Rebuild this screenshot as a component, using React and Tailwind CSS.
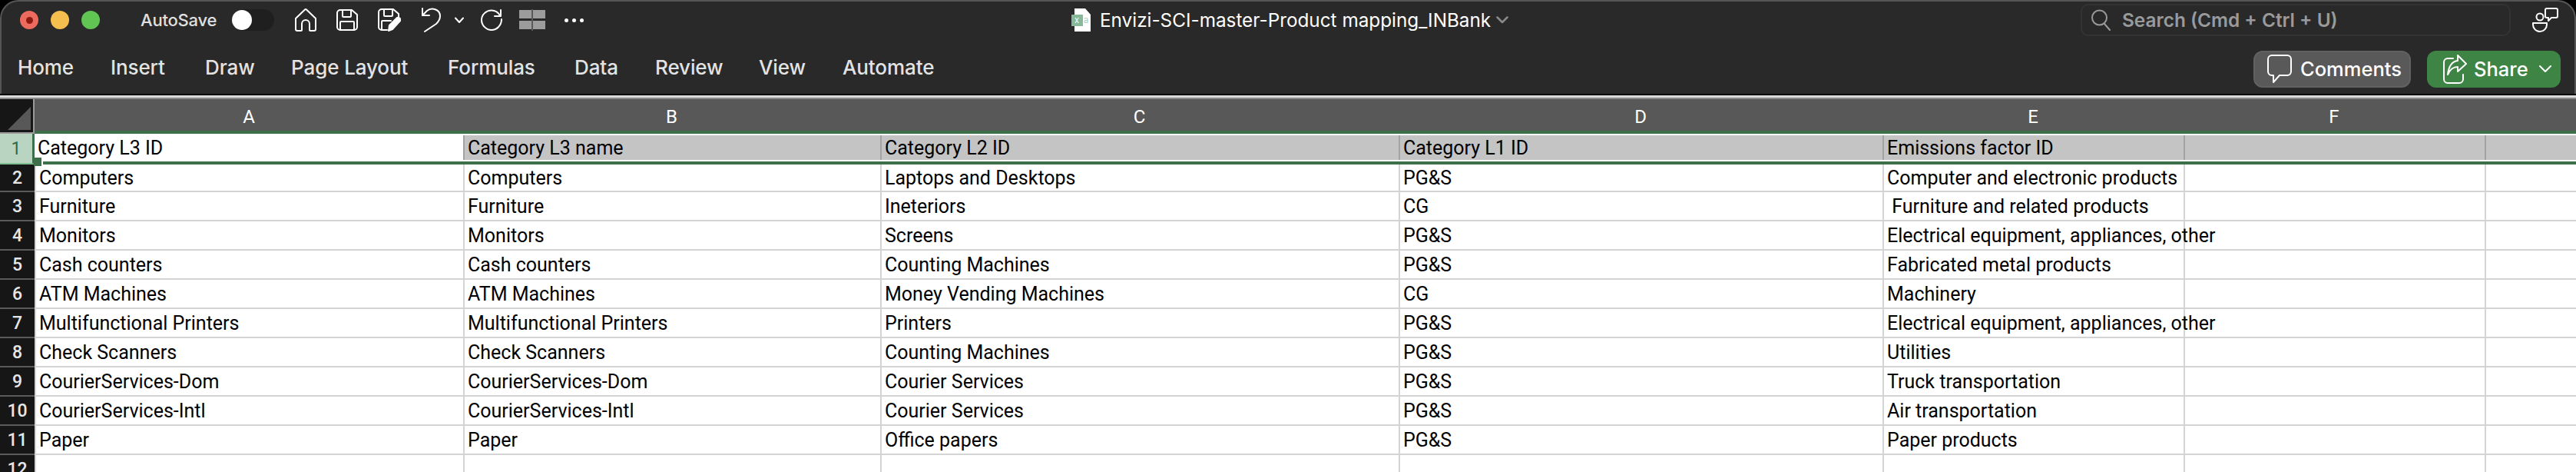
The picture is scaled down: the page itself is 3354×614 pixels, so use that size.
import React from "react";

const rows = [
  ["Computers", "Computers", "Laptops and Desktops", "PG&S", "Computer and electronic products"],
  ["Furniture", "Furniture", "Ineteriors", "CG", " Furniture and related products"],
  ["Monitors", "Monitors", "Screens", "PG&S", "Electrical equipment, appliances, other"],
  ["Cash counters", "Cash counters", "Counting Machines", "PG&S", "Fabricated metal products"],
  ["ATM Machines", "ATM Machines", "Money Vending Machines", "CG", "Machinery"],
  ["Multifunctional Printers", "Multifunctional Printers", "Printers", "PG&S", "Electrical equipment, appliances, other"],
  ["Check Scanners", "Check Scanners", "Counting Machines", "PG&S", "Utilities"],
  ["CourierServices-Dom", "CourierServices-Dom", "Courier Services", "PG&S", "Truck transportation"],
  ["CourierServices-Intl", "CourierServices-Intl", "Courier Services", "PG&S", "Air transportation"],
  ["Paper", "Paper", "Office papers", "PG&S", "Paper products"],
  ["", "", "", "", ""],
];

const headers = ["Category L3 ID", "Category L3 name", "Category L2 ID", "Category L1 ID", "Emissions factor ID", "", ""];
const letters = ["A", "B", "C", "D", "E", "F", ""];
const menu = [
  ["Home", "w-[121px]"],
  ["Insert", "w-[123px]"],
  ["Draw", "w-[112px]"],
  ["Page Layout", "w-[204px]"],
  ["Formulas", "w-[165px]"],
  ["Data", "w-[105px]"],
  ["Review", "w-[135px]"],
  ["View", "w-[109px]"],
  ["Automate", "w-[130px]"],
];

const gridCols = "grid grid-cols-[45px_558px_543px_675px_630px_392px_392px_119px]";
const cellFont = "font-['Roboto',sans-serif]";

const Icon = ({ w, h, children, className = "" }) => (
  <svg width={w} height={h} viewBox={`0 0 ${w} ${h}`} fill="none" stroke="#fff" strokeWidth="2" strokeLinecap="round" strokeLinejoin="round" className={`shrink-0 ${className}`}>
    {children}
  </svg>
);

const TitleBar = () => (
  <div className="flex h-[48px] items-center">
    <div className="ml-[24px] flex w-[116px] gap-[16px]">
      <div className="flex h-[24px] w-[24px] items-center justify-center rounded-full bg-[#ec6a5e]">
        <div className="h-[9px] w-[9px] rounded-full bg-[#8c1a10]" />
      </div>
      <div className="h-[24px] w-[24px] rounded-full bg-[#f5bf4f]" />
      <div className="h-[24px] w-[24px] rounded-full bg-[#61c554]" />
    </div>
    <span className="ml-[41px] w-[119px] text-[22px] font-medium tracking-[-0.2px] text-[#e0e0e0]">AutoSave</span>
    <div className="flex h-[28px] w-[55px] items-center rounded-full bg-[#1f1f1f]">
      <div className="h-[26px] w-[26px] rounded-full bg-white" />
    </div>
    {/* quick access */}
    <Icon w={28} h={30} className="ml-[27px]">
      <path d="M1 13 L13 1.5 a1.5 1.5 0 0 1 2 0 L27 13 V27 a2 2 0 0 1 -2 2 H20 a1 1 0 0 1 -1 -1 V20 a5 5 0 0 0 -10 0 V28 a1 1 0 0 1 -1 1 H3 a2 2 0 0 1 -2 -2 Z" />
    </Icon>
    <Icon w={28} h={28} className="ml-[26px]">
      <path d="M5 1 H20 L27 7 V23 a4 4 0 0 1 -4 4 H5 a4 4 0 0 1 -4 -4 V5 a4 4 0 0 1 4 -4 Z" />
      <path d="M8 1 V9 a1 1 0 0 0 1 1 H18 a1 1 0 0 0 1 -1 V1" />
      <path d="M5 27 V17 a1 1 0 0 1 1 -1 H22 a1 1 0 0 1 1 1 V27" />
    </Icon>
    <Icon w={30} h={30} className="ml-[26px]">
      <path d="M12 28 H5 a4 4 0 0 1 -4 -4 V5 a4 4 0 0 1 4 -4 H20 L27 7 V11" />
      <path d="M8 1 V9 a1 1 0 0 0 1 1 H18 a1 1 0 0 0 1 -1 V1" />
      <path d="M5 27 V17 a1 1 0 0 1 1 -1 H17" />
      <path d="M14 29 L15 22 L25 12 a3 3 0 0 1 4 4 L19 27 Z" fill="#fff" />
    </Icon>
    <Icon w={28} h={32} className="ml-[26px]">
      <path d="M2 1 V10 H11" />
      <path d="M2 10 L8 4 C14 -1 25 2 25 11 C25 15 23 18 20 21 L5 31" />
    </Icon>
    <Icon w={12} h={9} className="ml-[16px]">
      <path d="M1 1.5 L6 7 L11 1.5" />
    </Icon>
    <Icon w={28} h={28} className="ml-[22px]">
      <path d="M26 1 V9 H18" />
      <path d="M25 8 C22 3 18 1.5 14 1.5 C7 1.5 1 7 1 14 C1 21 7 27 14 27 C21 27 27 21 27 13" />
    </Icon>
    <svg width="34" height="28" viewBox="0 0 34 28" className="ml-[22px] shrink-0">
      <rect x="0" y="1" width="16" height="11" fill="#9c9c9c" />
      <rect x="18" y="1" width="16" height="11" fill="#9c9c9c" />
      <rect x="0" y="15" width="16" height="11" fill="#9c9c9c" />
      <rect x="18" y="15" width="16" height="11" fill="#9c9c9c" />
      <path d="M17 0 V28" stroke="#8a8a8a" />
    </svg>
    <div className="ml-[25px] flex gap-[5px]">
      <div className="h-[5px] w-[5px] rounded-full bg-white" />
      <div className="h-[5px] w-[5px] rounded-full bg-white" />
      <div className="h-[5px] w-[5px] rounded-full bg-white" />
    </div>
    {/* file name */}
    <svg width="26" height="30" viewBox="0 0 26 30" className="ml-[635px] shrink-0">
      <path d="M4 0 H18 L25 8 V30 H4 Z" fill="#fff" />
      <rect x="0" y="8" width="15" height="15" fill="#86b89a" />
      <text x="4" y="19" fontSize="11" fill="#fff" fontFamily="Inter">x</text>
      <text x="16" y="19" fontSize="11" fill="#a6cdb4" fontFamily="Inter">a</text>
    </svg>
    <span className="ml-[11px] whitespace-nowrap text-[24.3px] text-white">Envizi-SCI-master-Product mapping_INBank</span>
    <Icon w={16} h={10} className="ml-[7px]">
      <path d="M1.5 1.5 L8 8 L14.5 1.5" stroke="#8a8a8a" strokeWidth="2.5" />
    </Icon>
    {/* search */}
    <div className="ml-auto flex h-[42px] w-[560px] items-center rounded-[10px] border-2 border-[#333333] pl-[12px]">
      <svg width="26" height="28" viewBox="0 0 26 28" fill="none" stroke="#9a9a9a" strokeWidth="2" strokeLinecap="round" className="shrink-0">
        <circle cx="10.5" cy="11" r="9.5" />
        <path d="M17 19 L24 27" />
      </svg>
      <span className="ml-[14px] whitespace-nowrap text-[24.4px] font-semibold text-[#9a9a9a]">Search (Cmd + Ctrl + U)</span>
    </div>
    <svg width="34" height="32" viewBox="0 0 34 32" fill="none" stroke="#fff" strokeWidth="2" strokeLinejoin="round" className="ml-[28px] mr-[21px] shrink-0">
      <circle cx="10" cy="12" r="4.5" />
      <path d="M1 20 H19 V22 a9 9 0 0 1 -9 9 a9 9 0 0 1 -9 -9 Z" />
      <path d="M19 1 H31 a2 2 0 0 1 2 2 V11 a2 2 0 0 1 -2 2 H25 L21 17 V13 H19 a2 2 0 0 1 -2 -2 V3 a2 2 0 0 1 2 -2 Z" />
    </svg>
  </div>
);

const Ribbon = () => (
  <div className="flex h-[72px] items-center">
    <div className="ml-[21px] flex pt-[2px]">
      {menu.map(([label, width]) => (
        <span key={label} className={`${width} whitespace-nowrap text-[26px] font-medium tracking-[-0.1px] text-[#e3e3e3]`}>
          {label}
        </span>
      ))}
    </div>
    <div className="ml-auto mr-[18px] flex items-center gap-[21px] pt-[8px]">
      <div className="flex h-[48px] w-[205px] items-center rounded-[12px] border-2 border-[#616161] bg-[#595959] pl-[16px]">
        <Icon w={32} h={38}>
          <path d="M6 1 H26 a5 5 0 0 1 5 5 V22 a5 5 0 0 1 -5 5 H16 L8 36 V27 H6 a5 5 0 0 1 -5 -5 V6 a5 5 0 0 1 5 -5 Z" />
        </Icon>
        <span className="ml-[11px] text-[25.5px] font-medium text-white">Comments</span>
      </div>
      <div className="flex h-[48px] w-[174px] items-center rounded-[12px] bg-[#3e8445] pl-[20px]">
        <Icon w={32} h={40}>
          <path d="M14 6 H7 a5 5 0 0 0 -5 5 V33 a5 5 0 0 0 5 5 H22 a5 5 0 0 0 5 -5 V27" />
          <path d="M20 2 L31 13 L20 23 V17 C14 17 10 20 7 27 C8 18 12 10 20 9 Z" />
        </Icon>
        <span className="ml-[9px] text-[25.5px] font-medium text-white">Share</span>
        <Icon w={16} h={10} className="ml-[14px]">
          <path d="M1 1 L8 8 L15 1" />
        </Icon>
      </div>
    </div>
  </div>
);

const ColumnHeaders = () => (
  <div className={`${gridCols} h-[45px]`}>
    <div className="flex items-end border-b-2 border-r-2 border-[#9a9a9a] bg-[#161616] pb-[2px] pl-[10px]">
      <svg width="30" height="30" viewBox="0 0 30 30" className="mb-[1px]"><path d="M30 0 V30 H0 Z" fill="#585858" /></svg>
    </div>
    {letters.map((l, i) => (
      <div key={i} className={`flex items-center justify-center border-b-4 border-[#3d6f4a] bg-[#585858] pt-[4px] text-[24px] leading-[30px] text-white ${cellFont}`}>
        {l}
      </div>
    ))}
  </div>
);

const HeaderRow = () => (
  <div className={`${gridCols} h-[40px] text-[25px] leading-[30px] text-black ${cellFont}`}>
    <div className="flex items-center justify-center border-b-2 border-r-[3px] border-[#7fbf8f] border-r-[#3d6f4a] bg-[#b9d4c1] pt-[2px] text-[23px] text-[#2f6b45]">1</div>
    {headers.map((h, i) => (
      <div key={i} className="border-b-4 border-[#3d6f4a] bg-white pb-[2px] pt-[2px]">
        <div className={`flex h-[32px] items-center whitespace-nowrap pl-[4px] pt-[2px] ${i === 0 ? "bg-white" : "border-l-2 border-[#a3a3a3] bg-[#c4c4c4]"}`}>{h}</div>
      </div>
    ))}
  </div>
);

const DataRow = ({ num, cells }) => (
  <div className={`${gridCols} ${num === 2 ? "h-[36px]" : "h-[38px]"} text-[25px] leading-[30px] text-black ${cellFont}`}>
    <div className="flex items-center justify-center border-b-2 border-[#5a5a5a] bg-[#161616] pt-[2px] text-[23px] font-medium text-[#e6e6e6]">{num}</div>
    {[...cells, "", ""].map((c, i) => (
      <div key={i} className="flex items-center whitespace-pre border-b-2 border-l-2 border-[#d4d4d4] bg-white pl-[4px] pt-[2px] first:border-l-0">
        <span className="relative">{c}</span>
      </div>
    ))}
  </div>
);

export default function App() {
  return (
    <div className="h-[614px] w-[3354px] overflow-hidden bg-black font-['Inter',sans-serif]">
      <div className="h-[122px] rounded-t-[24px] border-x-2 border-t-2 border-[#555555] bg-[#292929]">
        <TitleBar />
        <Ribbon />
      </div>
      <div className="h-[2px] bg-black" />
      <div className="h-[3px] bg-[#dadada]" />
      <div className="h-[2px] bg-[#8a8a8a]" />
      <div className="relative">
        <ColumnHeaders />
        <HeaderRow />
        <div className="absolute left-[44px] top-[76px] h-[11px] w-[12px] border-r-2 border-white bg-[#3d6f4a]" />
        {rows.map((cells, i) => (
          <DataRow key={i} num={i + 2} cells={cells} />
        ))}
      </div>
    </div>
  );
}
